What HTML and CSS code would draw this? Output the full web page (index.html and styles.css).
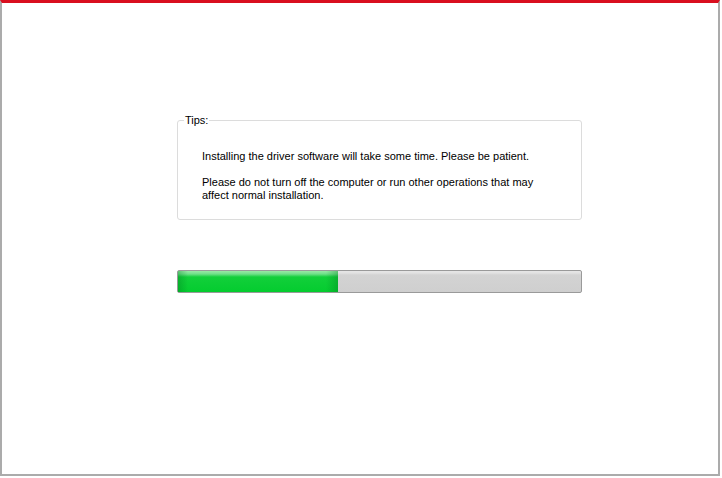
FILE: index.html
```html
<!DOCTYPE html>
<html>
<head>
<meta charset="utf-8">
<link rel="stylesheet" href="styles.css">
</head>
<body>
<div class="window">
  <div class="content">
    <fieldset class="tips">
      <legend>Tips:</legend>
      <div class="tips-body">
        <p class="line first">Installing the driver software will take some time. Please be patient.</p>
        <p class="line">Please do not turn off the computer or run other operations that may<br>affect normal installation.</p>
      </div>
    </fieldset>
    <div class="progress">
      <div class="fill" style="width: 160px"></div>
    </div>
  </div>
</div>
</body>
</html>
```
FILE: styles.css
```css
html, body {
  margin: 0;
  padding: 0;
  background: #ffffff;
}
.window {
  width: 716px;
  height: 471px;
  border-top: 3px solid #d90f1f;
  border-left: 2px solid #ababab;
  border-right: 2px solid #ababab;
  border-bottom: 2px solid #ababab;
  font-family: Tahoma, "Liberation Sans", Arial, sans-serif;
  font-size: 11px;
  color: #000;
}
.content {
  padding: 111px 0 0 175px;
  display: flex;
  flex-direction: column;
}
.tips {
  margin: 0;
  padding: 0 0 17px 6px;
  box-sizing: border-box;
  width: 405px;
  border: 1px solid #dcdcdc;
  border-radius: 3px;
}
.tips legend {
  padding: 0 1px;
  font-size: 11px;
  line-height: 13px;
}
.tips-body {
  padding: 23px 0 0 18px;
}
.line {
  margin: 0;
  line-height: 13px;
}
.line.first {
  margin-bottom: 13px;
}
.progress {
  margin-top: 50px;
  width: 405px;
  height: 23px;
  box-sizing: border-box;
  border: 1px solid #9a9a9a;
  border-radius: 2px;
  background: linear-gradient(to bottom, #e6e6e6 0px, #e2e2e2 2px, #d3d3d3 4px, #cfcfcf 100%);
  display: flex;
}
.fill {
  height: 100%;
  background:
    linear-gradient(to right, rgba(0,120,30,0.35) 0px, rgba(0,0,0,0) 10px, rgba(0,0,0,0) calc(100% - 12px), rgba(0,120,30,0.35) 100%),
    linear-gradient(to bottom, #9ae8a6 0px, #6fe089 3px, #12cf3a 6px, #04cc2f 100%);
}
```
